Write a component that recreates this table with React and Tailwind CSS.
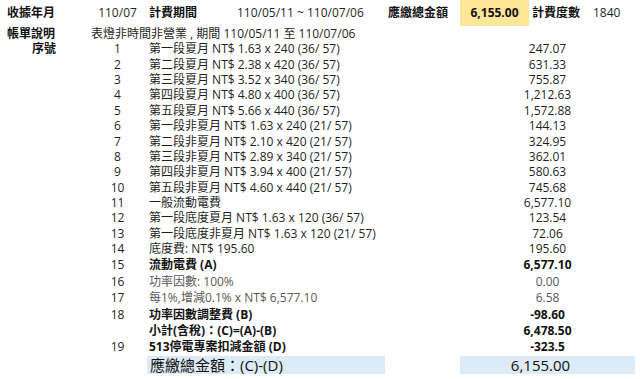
import React from "react";

const rows = [
  ["1", "第一段夏月 NT$ 1.63 x 240 (36/ 57)", "247.07"],
  ["2", "第二段夏月 NT$ 2.38 x 420 (36/ 57)", "631.33"],
  ["3", "第三段夏月 NT$ 3.52 x 340 (36/ 57)", "755.87"],
  ["4", "第四段夏月 NT$ 4.80 x 400 (36/ 57)", "1,212.63"],
  ["5", "第五段夏月 NT$ 5.66 x 440 (36/ 57)", "1,572.88"],
  ["6", "第一段非夏月 NT$ 1.63 x 240 (21/ 57)", "144.13"],
  ["7", "第二段非夏月 NT$ 2.10 x 420 (21/ 57)", "324.95"],
  ["8", "第三段非夏月 NT$ 2.89 x 340 (21/ 57)", "362.01"],
  ["9", "第四段非夏月 NT$ 3.94 x 400 (21/ 57)", "580.63"],
  ["10", "第五段非夏月 NT$ 4.60 x 440 (21/ 57)", "745.68"],
  ["11", "一般流動電費", "6,577.10"],
  ["12", "第一段底度夏月 NT$ 1.63 x 120 (36/ 57)", "123.54"],
  ["13", "第一段底度非夏月 NT$ 1.63 x 120 (21/ 57)", "72.06"],
  ["14", "底度費: NT$ 195.60", "195.60"],
];

const rows2 = [
  { n: "15", d: "流動電費 (A)", v: "6,577.10", kind: "bold", h: "h-[17px]" },
  { n: "16", d: "功率因數: 100%", v: "0.00", kind: "gray", h: "h-[16.5px]" },
  { n: "17", d: "每1%,增減0.1% x NT$ 6,577.10", v: "6.58", kind: "gray", h: "h-[16px]" },
  { n: "18", d: "功率因數調整費 (B)", v: "-98.60", kind: "bold", h: "h-[16.5px]" },
  { n: "", d: "小計(含稅)：(C)=(A)-(B)", v: "6,478.50", kind: "bold", h: "h-[16.5px]" },
  { n: "19", d: "513停電專案扣減金額 (D)", v: "-323.5", kind: "bold", h: "h-[16px]" },
];

function Row({ n, d, v, h, kind, label }) {
  const tone =
    kind === "bold"
      ? "font-bold text-[#111]"
      : kind === "gray"
      ? "text-[#595959]"
      : "text-[#1f1f1f]";
  return (
    <div className={`flex items-center ${h}`}>
      <div className="w-[88px] shrink-0 text-center font-bold text-[#111]">{label}</div>
      <div className="w-[59px] shrink-0 text-center text-[#1f1f1f]">{n}</div>
      <div className={`w-[238px] shrink-0 pl-[2px] whitespace-nowrap ${tone}`}>{d}</div>
      <div className="w-[75px] shrink-0" />
      <div className={`w-[175px] shrink-0 text-center ${tone}`}>{v}</div>
    </div>
  );
}

export default function App() {
  return (
    <div
      className="w-[640px] h-[379px] bg-white overflow-hidden text-[12px] leading-[14px]"
      style={{ fontFamily: '"Open Sans", "Noto Sans CJK TC", sans-serif' }}
    >
      {/* header */}
      <div className="flex items-center h-[26px]">
        <div className="w-[88px] shrink-0 pl-[7px] font-bold text-[#111]">收據年月</div>
        <div className="w-[59px] shrink-0 text-center text-[#1f1f1f]">110/07</div>
        <div className="w-[88px] shrink-0 pl-[2px] font-bold text-[#111]">計費期間</div>
        <div className="w-[150px] shrink-0 pl-[2px] text-[#1f1f1f] whitespace-nowrap">110/05/11 ~ 110/07/06</div>
        <div className="w-[75px] shrink-0 pl-[3px] font-bold text-[#111]">應繳總金額</div>
        <div className="w-[69px] shrink-0 h-full bg-[#ffe699] flex items-center justify-center font-bold text-[#111]">6,155.00</div>
        <div className="w-[64px] shrink-0 pl-[3px] font-bold text-[#111]">計費度數</div>
        <div className="shrink-0 text-[#1f1f1f]">1840</div>
      </div>
      {/* bill description */}
      <div className="flex items-center h-[15.5px]">
        <div className="w-[88px] shrink-0 pl-[7px] font-bold text-[#111]">帳單說明</div>
        <div className="pl-[3px] text-[#1f1f1f] whitespace-nowrap">表燈非時間非營業 , 期間 110/05/11 至 110/07/06</div>
      </div>
      {rows.map((r, i) => (
        <Row
          key={r[0]}
          n={r[0]}
          d={r[1]}
          v={r[2]}
          h="h-[15.4px]"
          kind="normal"
          label={i === 0 ? "序號" : ""}
        />
      ))}
      {rows2.map((r) => (
        <Row key={r.d} n={r.n} d={r.d} v={r.v} h={r.h} kind={r.kind} label="" />
      ))}
      {/* final */}
      <div className="flex h-[19px]">
        <div className="w-[147px] shrink-0" />
        <div className="w-[238px] shrink-0 bg-[#ddebf7] mt-[1px] flex items-center pl-[3px] text-[15px] leading-[17px] text-[#111] whitespace-nowrap">
          應繳總金額：(C)-(D)
        </div>
        <div className="w-[75px] shrink-0" />
        <div className="w-[175px] shrink-0 bg-[#ddebf7] mt-[1px] flex items-center justify-center pr-[14px] text-[15px] leading-[17px] text-[#111]">
          6,155.00
        </div>
      </div>
    </div>
  );
}
